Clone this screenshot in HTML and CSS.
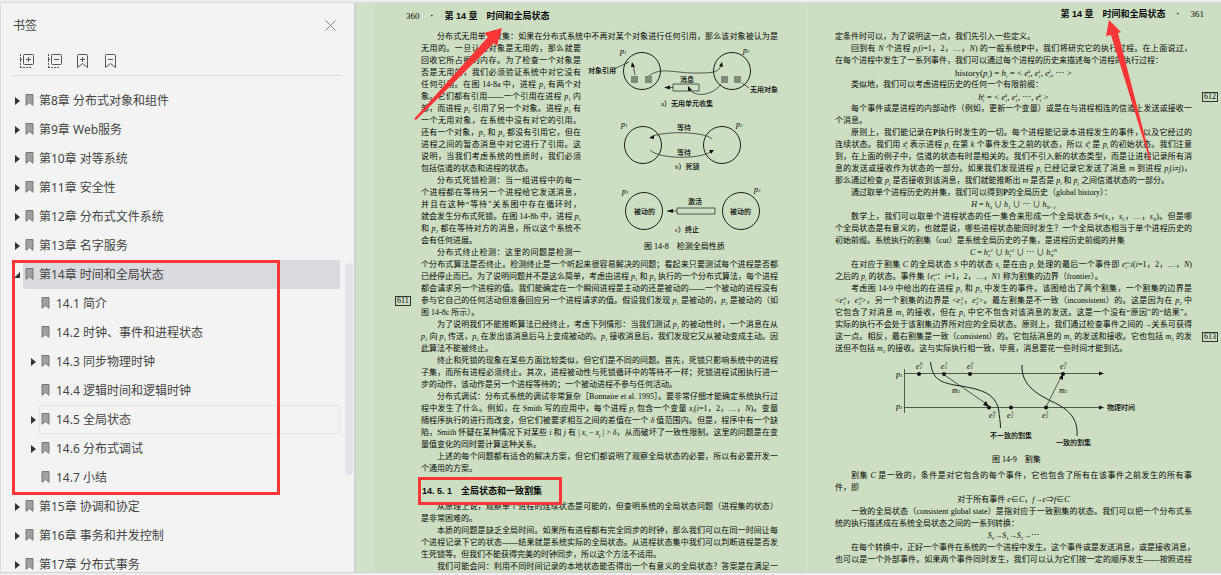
FILE: index.html
```html
<!DOCTYPE html>
<html lang="zh-CN">
<head>
  <meta charset="UTF-8">
  <title>分布式系统 - 第14章 时间和全局状态</title>
  <meta name="viewport" content="width=device-width, initial-scale=1.0">
  <link rel="stylesheet" href="styles.css">
</head>
<body>
  <!-- shared icons -->
  <svg class="defs" width="0" height="0" aria-hidden="true">
    <symbol id="i-mark" viewBox="0 0 9 12">
      <path d="M1 .5h7v10.8L4.500 8.500 1 11.300z" fill="#a0a0a0" stroke="#777" stroke-width="1"/>
    </symbol>
    <symbol id="i-closed" viewBox="0 0 5 8"><path d="M0 0l5 4-5 4z" fill="#333"/></symbol>
    <symbol id="i-open" viewBox="0 0 6 6"><path d="M6 0v6H0z" fill="#333"/></symbol>
  </svg>

  <div class="viewer">
    <!-- SIDEBAR -->
    <aside class="sidebar">
      <div class="side-head">
        <h1>书签</h1>
        <button type="button" aria-label="关闭">
          <svg width="11" height="11" viewBox="0 0 11 11"><path d="M.5 .5l10 10M10.500 .5l-10 10" stroke="#888" fill="none"/></svg>
        </button>
      </div>
      <div class="tools">
        <button type="button" aria-label="展开全部">
          <svg width="16" height="16" viewBox="0 0 16 16" fill="none" stroke="#555"><rect x="4.500" y="1.500" width="10" height="10" rx="1"/><path d="M7 6.500h5M9.500 4v5"/><path d="M1.500 1v14M1 14.500h11M1 6.500h3" stroke-dasharray="2 1"/></svg>
        </button>
        <button type="button" aria-label="折叠全部">
          <svg width="16" height="16" viewBox="0 0 16 16" fill="none" stroke="#555"><rect x="4.500" y="1.500" width="10" height="10" rx="1"/><path d="M7 6.500h5"/><path d="M1.500 1v14M1 14.500h11M1 6.500h3" stroke-dasharray="2 1"/></svg>
        </button>
        <button type="button" aria-label="添加书签">
          <svg width="16" height="16" viewBox="0 0 16 16" fill="none" stroke="#555"><path d="M2.500 2.500q0-1 1-1h8q1 0 1 1v12l-5-4-5 4zM5 6.500h5M7.500 4v5"/></svg>
        </button>
        <button type="button" aria-label="删除书签">
          <svg width="16" height="16" viewBox="0 0 16 16" fill="none" stroke="#555"><path d="M2.500 2.500q0-1 1-1h8q1 0 1 1v12l-5-4-5 4zM5 6.500h5"/></svg>
        </button>
      </div>

      <ul class="tree">
        <li><svg class="arrow"><use href="#i-closed"/></svg><a href="#"><svg class="mark"><use href="#i-mark"/></svg>第8章 分布式对象和组件</a></li>
        <li><svg class="arrow"><use href="#i-closed"/></svg><a href="#"><svg class="mark"><use href="#i-mark"/></svg>第9章 Web服务</a></li>
        <li><svg class="arrow"><use href="#i-closed"/></svg><a href="#"><svg class="mark"><use href="#i-mark"/></svg>第10章 对等系统</a></li>
        <li><svg class="arrow"><use href="#i-closed"/></svg><a href="#"><svg class="mark"><use href="#i-mark"/></svg>第11章 安全性</a></li>
        <li><svg class="arrow"><use href="#i-closed"/></svg><a href="#"><svg class="mark"><use href="#i-mark"/></svg>第12章 分布式文件系统</a></li>
        <li><svg class="arrow"><use href="#i-closed"/></svg><a href="#"><svg class="mark"><use href="#i-mark"/></svg>第13章 名字服务</a></li>
        <li class="group">
          <div class="row"><svg class="arrow open"><use href="#i-open"/></svg><a class="active" href="#"><svg class="mark"><use href="#i-mark"/></svg>第14章 时间和全局状态</a></div>
          <ul>
            <li><span class="arrow"></span><a href="#"><svg class="mark"><use href="#i-mark"/></svg>14.1 简介</a></li>
            <li><span class="arrow"></span><a href="#"><svg class="mark"><use href="#i-mark"/></svg>14.2 时钟、事件和进程状态</a></li>
            <li><svg class="arrow"><use href="#i-closed"/></svg><a href="#"><svg class="mark"><use href="#i-mark"/></svg>14.3 同步物理时钟</a></li>
            <li><span class="arrow"></span><a href="#"><svg class="mark"><use href="#i-mark"/></svg>14.4 逻辑时间和逻辑时钟</a></li>
            <li><svg class="arrow"><use href="#i-closed"/></svg><a class="hover" href="#"><svg class="mark"><use href="#i-mark"/></svg>14.5 全局状态</a></li>
            <li><svg class="arrow"><use href="#i-closed"/></svg><a href="#"><svg class="mark"><use href="#i-mark"/></svg>14.6 分布式调试</a></li>
            <li><span class="arrow"></span><a href="#"><svg class="mark"><use href="#i-mark"/></svg>14.7 小结</a></li>
          </ul>
          <div class="redbox"></div>
        </li>
        <li><svg class="arrow"><use href="#i-closed"/></svg><a href="#"><svg class="mark"><use href="#i-mark"/></svg>第15章 协调和协定</a></li>
        <li><svg class="arrow"><use href="#i-closed"/></svg><a href="#"><svg class="mark"><use href="#i-mark"/></svg>第16章 事务和并发控制</a></li>
        <li><svg class="arrow"><use href="#i-closed"/></svg><a href="#"><svg class="mark"><use href="#i-mark"/></svg>第17章 分布式事务</a></li>
      </ul>
      <div class="thumb"></div>
    </aside>

    <!-- PAGES -->
    <main class="pages">
      <article class="page left">
        <header><span class="num">360</span><b>·</b><b>第 14 章　时间和全局状态</b></header>
        <p class="in">分布式无用单元收集：如果在分布式系统中不再对某个对象进行任何引用，那么该对象被认为是</p>
        <div class="split">
          <div class="narrow">
            <p>无用的。一旦认为对象是无用的，那么就要</p>
            <p>回收它所占据的内存。为了检查一个对象是</p>
            <p>否是无用的，我们必须验证系统中对它没有</p>
            <p>任何引用。在图 14-8a 中，进程 <i>p</i><sub>1</sub> 有两个对</p>
            <p>象。它们都有引用——一个引用在进程 <i>p</i><sub>1</sub> 内</p>
            <p>部，而进程 <i>p</i><sub>2</sub> 引用了另一个对象。进程 <i>p</i><sub>2</sub> 有</p>
            <p>一个无用对象，在系统中没有对它的引用。</p>
            <p>还有一个对象，<i>p</i><sub>1</sub> 和 <i>p</i><sub>2</sub> 都没有引用它，但在</p>
            <p>进程之间的暂态消息中对它进行了引用。这</p>
            <p>说明，当我们考虑系统的性质时，我们必须</p>
            <p class="end">包括信道的状态和进程的状态。</p>
            <p class="in">分布式死锁检测：当一组进程中的每一</p>
            <p>个进程都在等待另一个进程给它发送消息，</p>
            <p>并且在这种“等待”关系图中存在循环时，</p>
            <p>就会发生分布式死锁。在图 14-8b 中，进程 <i>p</i><sub>1</sub></p>
            <p>和 <i>p</i><sub>2</sub> 都在等待对方的消息，所以这个系统不</p>
            <p class="end">会有任何进展。</p>
            <p class="in">分布式终止检测：这里的问题是检测一</p>
          </div>
          <figure>
            <svg viewBox="581 43 197 216" role="img" aria-label="图 14-8 检测全局性质">
              <g class="draw">
                <circle cx="642" cy="71" r="18.500"/><circle cx="732" cy="71" r="18.500"/>
                <circle cx="643" cy="145" r="18.500"/><circle cx="722" cy="145" r="18.500"/>
                <circle cx="644" cy="211" r="18.500"/><circle cx="741" cy="211" r="18.500"/>
              </g>
              <g class="thin">
                <path d="M635 75l-2-11M614 69l15-7M649 76c12-10 28-2 50-3 15 0 20-1 22-8M689 88c4 10 24 8 32-4M673 84h26v7h-26zM673 87.500h-8M742 83l7 5"/>
                <path d="M712 139c-8-8-50-8-61-2M650 150c8 9 50 10 62 1"/>
                <path d="M677 208h38v6h-38zM677 211h-10"/>
              </g>
              <g class="head">
                <path d="M632 62l3 5h-4zM722 62l1 5-4-1zM664 87.500l6-2v4zM688 86l4 4-4 1zM649 138l5-3v4zM714 150l-5 0 2 4zM667 211l6-2v4z"/>
              </g>
              <g class="block">
                <path d="M631 76h7v7h-7zM645 76h7v7h-7zM721 76h7v7h-7zM734 76h7v7h-7z"/>
              </g>
              <g class="var">
                <text x="620" y="54">p<tspan class="s">1</tspan></text><text x="743" y="53">p<tspan class="s">2</tspan></text>
                <text x="621" y="127">p<tspan class="s">1</tspan></text><text x="736" y="127">p<tspan class="s">2</tspan></text>
                <text x="622" y="194">p<tspan class="s">1</tspan></text><text x="754" y="192">p<tspan class="s">2</tspan></text>
              </g>
              <g class="lab">
                <text x="588" y="73">对象引用</text><text x="680" y="82">消息</text><text x="750" y="92">无用对象</text>
                <text x="661" y="106">a）无用单元收集</text>
                <text x="677" y="130">等待</text><text x="677" y="155">等待</text><text x="675" y="169">b）死锁</text>
                <text x="634" y="214">被动的</text><text x="688" y="204">激活</text><text x="730" y="214">被动的</text>
                <text x="675" y="232">c）终止</text>
              </g>
              <text class="cap" x="644" y="249">图 14-8　检测全局性质</text>
            </svg>
          </figure>
        </div>
        <p>个分布式算法是否终止。检测终止是一个听起来很容易解决的问题；看起来只要测试每个进程是否都</p>
        <p>已经停止而已。为了说明问题并不是这么简单，考虑由进程 <i>p</i><sub>1</sub> 和 <i>p</i><sub>2</sub> 执行的一个分布式算法，每个进程</p>
        <p>都会请求另一个进程的值。我们能确定在一个瞬间进程是主动的还是被动的——一个被动的进程没有</p>
        <p class="noted"><span class="note">611</span>参与它自己的任何活动但准备回应另一个进程请求的值。假设我们发现 <i>p</i><sub>1</sub> 是被动的，<i>p</i><sub>2</sub> 是被动的（如</p>
        <p class="end">图 14-8c 所示）。</p>
        <p class="in">为了说明我们不能推断算法已经终止，考虑下列情形：当我们测试 <i>p</i><sub>1</sub> 的被动性时，一个消息在从</p>
        <p><i>p</i><sub>2</sub> 向 <i>p</i><sub>1</sub> 传送，<i>p</i><sub>2</sub> 在发出该消息后马上变成被动的。<i>p</i><sub>1</sub> 接收消息后，我们发现它又从被动变成主动。因</p>
        <p class="end">此算法不能被终止。</p>
        <p class="in">终止和死锁的现象在某些方面比较类似，但它们是不同的问题。首先，死锁只影响系统中的进程</p>
        <p>子集，而所有进程必须终止。其次，进程被动性与死锁循环中的等待不一样；死锁进程试图执行进一</p>
        <p class="end">步的动作，该动作是另一个进程等待的；一个被动进程不参与任何活动。</p>
        <p class="in">分布式调试：分布式系统的调试非常复杂［Bonnaire et al. 1995］。要非常仔细才能确定系统执行过</p>
        <p>程中发生了什么。例如，在 Smith 写的应用中，每个进程 <i>p<sub>i</sub></i> 包含一个变量 <i>x<sub>i</sub></i>(<i>i</i>=1，2，…，<i>N</i>)。变量</p>
        <p>随程序执行的进行而改变，但它们被要求相互之间的差值在一个 <i>δ</i> 值范围内。但是，程序中有一个缺</p>
        <p>陷，Smith 怀疑在某种情况下对某些 <i>i</i> 和 <i>j</i> 有 | <i>x<sub>i</sub></i> − <i>x<sub>j</sub></i> | &gt; <i>δ</i>，从而破坏了一致性限制。这里的问题是在变</p>
        <p class="end">量值变化的同时要计算这种关系。</p>
        <p class="in">上述的每个问题都有适合的解决方案，但它们都说明了观察全局状态的必要，所以有必要开发一</p>
        <p class="end">个通用的方案。</p>
        <h2>14. 5. 1　全局状态和一致割集</h2>
        <p class="in">从原理上说，观察单个进程的连续状态是可能的，但查明系统的全局状态问题（进程集的状态）</p>
        <p class="end">是非常困难的。</p>
        <p class="in">本质的问题是缺乏全局时间。如果所有进程都有完全同步的时钟，那么我们可以在同一时间让每</p>
        <p>个进程记录下它的状态——结果就是系统实际的全局状态。从进程状态集中我们可以判断进程是否发</p>
        <p class="end">生死锁等。但我们不能获得完美的时钟同步，所以这个方法不适用。</p>
        <p class="in">我们可能会问：利用不同时间记录的本地状态能否得出一个有意义的全局状态？答案是在满足一</p>
        <svg class="pointer" width="90" height="94" viewBox="0 0 90 94"><path d="M0 91L74 9 70 5 88 0 83 18 80 15 2 92z"/></svg>
      </article>

      <article class="page right">
        <header><b>第 14 章　时间和全局状态</b><b>·</b><span class="num">361</span></header>
        <p class="end">定条件时可以，为了说明这一点，我们先引入一些定义。</p>
        <p class="in">回到有 <i>N</i> 个进程 <i>p<sub>i</sub></i>(<i>i</i>=1，2，…，<i>N</i>) 的一般系统<b>P</b>中，我们将研究它的执行过程。在上面说过，</p>
        <p class="end">在每个进程中发生了一系列事件，我们可以通过每个进程的历史来描述每个进程的执行过程：</p>
        <p class="eq wide">history(<i>p<sub>i</sub></i>) = <i>h<sub>i</sub></i> = &lt; <i>e<sub>i</sub></i><sup>0</sup>, <i>e<sub>i</sub></i><sup>1</sup>, <i>e<sub>i</sub></i><sup>2</sup>, ⋯ &gt;</p>
        <p class="in end">类似地，我们可以考虑进程历史的任何一个有限前缀：</p>
        <p class="eq wide noted"><i>h<sub>i</sub><sup>k</sup></i> = &lt; <i>e<sub>i</sub></i><sup>0</sup>, <i>e<sub>i</sub></i><sup>1</sup>, ⋯, <i>e<sub>i</sub><sup>k</sup></i> &gt;<span class="note">612</span></p>
        <p class="in">每个事件或是进程的内部动作（例如，更新一个变量）或是在与进程相连的信道上发送或接收一</p>
        <p class="end">个消息。</p>
        <p class="in">原则上，我们能记录在<b>P</b>执行时发生的一切。每个进程能记录本进程发生的事件，以及它经过的</p>
        <p>连续状态。我们用 <i>s<sub>i</sub><sup>k</sup></i> 表示进程 <i>p<sub>i</sub></i> 在第 <i>k</i> 个事件发生之前的状态，所以 <i>s<sub>i</sub></i><sup>0</sup> 是 <i>p<sub>i</sub></i> 的初始状态。我们注意</p>
        <p>到，在上面的例子中，信道的状态有时是相关的。我们不引入新的状态类型，而是让进程记录所有消</p>
        <p>息的发送或接收作为状态的一部分。如果我们发现进程 <i>p<sub>i</sub></i> 已经记录它发送了消息 <i>m</i> 到进程 <i>p<sub>j</sub></i>(<i>i</i>≠<i>j</i>)，</p>
        <p class="end">那么通过检查 <i>p<sub>j</sub></i> 是否接收到该消息，我们就能推断出 <i>m</i> 是否是 <i>p<sub>i</sub></i> 和 <i>p<sub>j</sub></i> 之间信道状态的一部分。</p>
        <p class="in end">通过取单个进程历史的并集，我们可以得到<b>P</b>的全局历史（global history）：</p>
        <p class="eq"><i>H</i> = <i>h</i><sub>0</sub> ∪ <i>h</i><sub>1</sub> ∪ ⋯ ∪ <i>h<sub>N−1</sub></i></p>
        <p class="in">数学上，我们可以取单个进程状态的任一集合来形成一个全局状态 <i>S</i>=(<i>s</i><sub>1</sub>，<i>s</i><sub>2</sub>，…，<i>s<sub>N</sub></i>)。但是哪</p>
        <p>个全局状态是有意义的，也就是说，哪些进程状态能同时发生？一个全局状态相当于单个进程历史的</p>
        <p class="end">初始前缀。系统执行的割集（cut）是系统全局历史的子集，是进程历史前缀的并集</p>
        <p class="eq"><i>C</i> = <i>h</i><sub>1</sub><sup><i>c1</i></sup> ∪ <i>h</i><sub>2</sub><sup><i>c2</i></sup> ∪ ⋯ ∪ <i>h<sub>N</sub><sup>cN</sup></i></p>
        <p class="in">在对应于割集 <i>C</i> 的全局状态 <i>S</i> 中的状态 <i>s<sub>i</sub></i> 是在由 <i>p<sub>i</sub></i> 处理的最后一个事件即 <i>e<sub>i</sub><sup>ci</sup></i>:<i>i</i>(<i>i</i>=1，2，…，<i>N</i>)</p>
        <p class="end">之后的 <i>p<sub>i</sub></i> 的状态。事件集 {<i>e<sub>i</sub><sup>ci</sup></i>：<i>i</i>=1，2，…，<i>N</i>} 称为割集的边界（frontier）。</p>
        <p class="in">考虑图 14-9 中给出的在进程 <i>p</i><sub>1</sub> 和 <i>p</i><sub>2</sub> 中发生的事件。该图给出了两个割集，一个割集的边界是</p>
        <p>&lt;<i>e</i><sub>1</sub><sup>0</sup>，<i>e</i><sub>2</sub><sup>0</sup>&gt;，另一个割集的边界是 &lt;<i>e</i><sub>1</sub><sup>2</sup>，<i>e</i><sub>2</sub><sup>2</sup>&gt;。最左割集是不一致（inconsistent）的。这是因为在 <i>p</i><sub>2</sub> 中</p>
        <p>它包含了对消息 <i>m</i><sub>1</sub> 的接收，但在 <i>p</i><sub>1</sub> 中它不包含对该消息的发送。这是一个没有“原因”的“结果”。</p>
        <p>实际的执行不会处于该割集边界所对应的全局状态。原则上，我们通过检查事件之间的→关系可获得</p>
        <p class="noted">这一点。相反，最右割集是一致（consistent）的。它包括消息的 <i>m</i><sub>1</sub> 的发送和接收。它也包括 <i>m</i><sub>2</sub> 的发<span class="note">613</span></p>
        <p class="end">送但不包括 <i>m</i><sub>2</sub> 的接收。这与实际执行相一致，毕竟，消息要花一些时间才能到达。</p>
        <figure>
          <svg viewBox="835 358 357 112" role="img" aria-label="图 14-9 割集">
            <g class="thin">
              <path d="M904.500 369v44M904.500 373.500H1100M904.500 407.500H1100M943 374l45 31M1046 407l15-30"/>
            </g>
            <g class="draw">
              <path d="M930.500 362c2 17 9 20 24 23 27 4 40 8 44 24 1 8 2 14 2 19M1022 365c-1 20 15 29 29 36 20 9 27 19 26 35"/>
            </g>
            <g class="head">
              <path d="M1104 373.500l-5-2v4zM1104 407.500l-5-2v4zM989 407l-6-2 3-4zM1063 374l-4 4 4 2z"/>
              <circle cx="919" cy="374" r="2"/><circle cx="944" cy="374" r="2"/><circle cx="970" cy="374" r="2"/><circle cx="1063" cy="374" r="2"/>
              <circle cx="989" cy="407.500" r="2"/><circle cx="1011" cy="407.500" r="2"/><circle cx="1046" cy="407.500" r="2"/>
            </g>
            <g class="var">
              <text x="896" y="377">p<tspan class="s">1</tspan></text><text x="896" y="409">p<tspan class="s">2</tspan></text>
              <text x="916" y="369">e<tspan class="s">1</tspan></text><text x="941" y="369">e<tspan class="s">1</tspan></text><text x="967" y="369">e<tspan class="s">1</tspan></text><text x="1060" y="369">e<tspan class="s">1</tspan></text>
              <text x="989" y="418">e<tspan class="s">2</tspan></text><text x="1007" y="418">e<tspan class="s">2</tspan></text><text x="1042" y="418">e<tspan class="s">2</tspan></text>
              <text x="952" y="393">m<tspan class="s">1</tspan></text><text x="1059" y="393">m<tspan class="s">2</tspan></text>
            </g>
            <g class="sup">
              <text x="920" y="365">0</text><text x="945" y="365">1</text><text x="971" y="365">2</text><text x="1064" y="365">3</text>
              <text x="993" y="414">0</text><text x="1011" y="414">1</text><text x="1046" y="414">2</text>
            </g>
            <g class="lab">
              <text x="1107" y="410">物理时间</text><text x="990" y="438">不一致的割集</text><text x="1056" y="445">一致的割集</text>
            </g>
            <text class="cap" x="992" y="462">图 14-9　割集</text>
          </svg>
        </figure>
        <p class="in">割集 <i>C</i> 是一致的，条件是对它包含的每个事件，它也包含了所有在该事件之前发生的所有事</p>
        <p class="end">件，即</p>
        <p class="eq">对于所有事件 <i>e</i>∈<i>C</i>，<i>f</i>→<i>e</i>⇒<i>f</i>∈<i>C</i></p>
        <p class="in">一致的全局状态（consistent global state）是指对应于一致割集的状态。我们可以把一个分布式系</p>
        <p class="end">统的执行描述成在系统全局状态之间的一系列转换：</p>
        <p class="eq"><i>S</i><sub>0</sub>→<i>S</i><sub>1</sub>→<i>S</i><sub>2</sub>→⋯</p>
        <p class="in">在每个转换中，正好一个事件在系统的一个进程中发生。这个事件或是发送消息，或是接收消息，</p>
        <p>也可以是一个外部事件。如果两个事件同时发生，我们可以认为它们按一定的顺序发生——按照进程</p>
        <svg class="pointer" width="48" height="144" viewBox="0 0 48 144"><path d="M3 0L15 12 12 13 45 140 44 141 5 15 0 16z"/></svg>
      </article>
    </main>
  </div>
</body>
</html>
```

FILE: styles.css
```css
* {
  margin: 0;
  padding: 0;
  box-sizing: border-box;
}

body {
  height: 100vh;
  padding: 2px 0;
  background: #ededed;
  font-family: "Noto Sans", "Noto Sans CJK SC", sans-serif;
  font-size: 12px;
  color: #444;
  overflow: hidden;
}

.defs {
  position: absolute;
}

.viewer {
  display: flex;
  height: 100%;
  border-top: 1px solid #d9dcd8;
  border-bottom: 1px solid #d3d3d5;
}

/* SIDEBAR */
.sidebar {
  position: relative;
  flex: 0 0 356px;
  overflow: hidden;
  background: #f3f3f3;
  border-left: 1px solid #dedede;
  border-right: 2px solid #cfd1d4;
}

.sidebar button {
  display: flex;
  background: none;
  border: none;
  cursor: pointer;
}

.side-head {
  display: flex;
  justify-content: space-between;
  align-items: center;
  height: 44px;
  padding: 0 18px 0 12px;
}

.side-head h1 {
  font-size: 12px;
  font-weight: normal;
}

.tools {
  display: flex;
  gap: 12px;
  height: 29px;
  margin: 0 12px;
  padding: 6px 6px 0;
  border-bottom: 1px solid #dcdcdc;
}

.tree {
  margin-top: 10px;
  list-style: none;
}

.tree ul {
  padding-left: 16px;
  list-style: none;
}

.tree li:not(.group),
.row {
  display: flex;
  align-items: center;
  height: 29px;
  padding: 0 14px;
}

.arrow {
  flex: none;
  width: 5px;
  height: 8px;
  margin-right: 3px;
}

.arrow.open {
  width: 6px;
  height: 6px;
  margin: 0 3px 0 -1px;
}

.mark {
  width: 9px;
  height: 12px;
  margin-right: 5px;
}

.tree ul .mark {
  margin-right: 6px;
}

.tree a {
  display: flex;
  align-items: center;
  flex: 1;
  height: 29px;
  padding: 0 0 2px 2px;
  border-radius: 2px;
  color: #444;
  text-decoration: none;
}

.tree a.active {
  background: #dadbdf;
}

.tree a.hover {
  box-shadow: inset 0 0 0 1px #e4e4e4;
}

.group {
  position: relative;
}

.redbox {
  position: absolute;
  top: 0;
  right: 74px;
  bottom: -3px;
  left: 11px;
  border: 3px solid #fb3636;
}

.thumb {
  position: absolute;
  top: 260px;
  right: 1px;
  width: 8px;
  height: 212px;
  border-radius: 4px;
  background: #e4e5e8;
}

/* PAGES */
.pages {
  display: grid;
  grid-template-columns: 432fr 415fr;
  flex: 1;
  min-width: 0;
  padding-left: 18px;
  background: #d2e2c8;
}

.page {
  position: relative;
  min-width: 0;
  overflow: hidden;
  background: #cddec3;
  color: #080a07;
  font-family: "Liberation Serif", "Noto Sans CJK SC", serif;
  font-size: 8px;
}

.page.left {
  padding: 7px 28px 0 47px;
}

.page.right {
  padding: 5px 29px 0 28px;
  border-left: 1px solid #d4e2cb;
}

.page header {
  display: flex;
  gap: 11px;
  height: 21px;
  font-size: 9px;
  line-height: 12px;
}

.page header b {
  font-family: "Liberation Sans", "Noto Sans CJK SC", sans-serif;
}

.page.left header {
  margin-left: -15px;
}

.page.right header {
  justify-content: flex-end;
  height: 23px;
  margin-right: -12px;
}

.page p {
  height: 12px;
  line-height: 12px;
  white-space: nowrap;
  text-align: justify;
  text-align-last: justify;
}

.page p.in {
  padding-left: 16px;
}

.page p.end {
  text-align-last: left;
}

.page p.eq {
  text-align-last: center;
}

.page p.wide {
  font-size: 9px;
}

sub,
sup {
  font-size: 5px;
  line-height: 0;
}

sub {
  vertical-align: -2px;
}

sup {
  vertical-align: 3px;
}

/* superscript sits above the subscript */
sub + sup,
i + sup {
  margin-left: -2px;
}

.page h2 {
  position: relative;
  width: max-content;
  margin: 2px 0 0 -3px;
  padding: 0 17px 0 1px;
  border: 3px solid #fb3636;
  font-family: "Liberation Sans", "Noto Sans CJK SC", sans-serif;
  font-size: 9px;
  line-height: 22px;
}

.page h2 + p {
  margin-top: -4px;
}

.noted {
  position: relative;
}

.note {
  position: absolute;
  top: 1px;
  padding: 0 1px;
  border: 1px solid #333;
  font-size: 8px;
  line-height: 8px;
}

.left .note {
  left: -26px;
}

.right .note {
  right: -26px;
}

.split {
  display: flex;
}

.narrow {
  flex: 0 0 160px;
}

.split figure {
  flex: 1;
}

.right figure {
  margin-top: 3px;
}

figure svg {
  display: block;
  width: 100%;
}

.draw,
.thin {
  fill: none;
  stroke: #1c201a;
  stroke-width: 1;
}

.thin {
  stroke-width: .7;
}

.head {
  fill: #111;
}

.block {
  fill: #7f8a79;
}

.var {
  font-size: 8px;
  font-style: italic;
}

.s,
.sup {
  font-size: 5px;
}

.lab {
  font-size: 7px;
  font-weight: 500;
}

.cap {
  font-size: 8px;
}

/* red arrows over the pages */
.pointer {
  position: absolute;
  fill: #fb3636;
}

.left .pointer {
  top: 25px;
  left: 40px;
}

.right .pointer {
  top: 17px;
  left: 299px;
}
```
